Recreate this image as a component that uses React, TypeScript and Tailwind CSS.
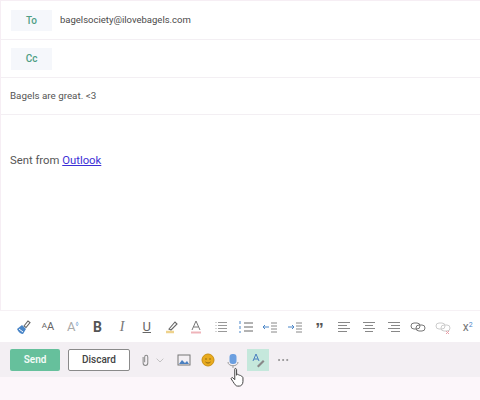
import { MoreHorizontal } from "lucide-react";

const FONT = { fontFamily: 'Roboto, "Noto Sans", sans-serif' };

function Ic({ children, className = "w-[18px]" }: { children: React.ReactNode; className?: string }) {
  return (
    <svg viewBox="0 0 18 18" fill="none" className={`h-[18px] shrink-0 ${className}`}>
      {children}
    </svg>
  );
}

// every button in the format bar sits in a cell of the same width
function Cell({ children }: { children: React.ReactNode }) {
  return <div className="flex h-[18px] w-[24.7px] shrink-0 items-center justify-center">{children}</div>;
}

function Lines({ rows }: { rows: [number, number][] }) {
  return (
    <Ic>
      {rows.map(([x1, x2], i) => (
        <path key={i} d={`M${x1} ${4.5 + i * 3}H${x2}`} stroke="#888" strokeWidth="1" />
      ))}
    </Ic>
  );
}

function FormatBar() {
  return (
    <div className="flex h-[32px] items-center overflow-hidden border-t border-[#f6f1f5] bg-white pl-[11px]">
      <Cell>
        <Ic>
          <path d="M10 8l4-5 2 1.5-4 5z" stroke="#666" strokeWidth="1.1" />
          <path d="M3 11l5-4 4 4-3 5c-2 0-5-2-6-5z" fill="#4a86c8" />
          <path d="M5 11l4 3" stroke="#fff" />
        </Ic>
      </Cell>
      <Cell>
        <span className="text-[11px] leading-none text-[#666]">
          <span className="relative top-[-2px] text-[8px]">A</span>A
        </span>
      </Cell>
      <Cell>
        <span className="text-[13px] leading-none text-[#aaa]">
          A<span className="relative top-[-5px] text-[6px] text-[#6a9bd0]">◊</span>
        </span>
      </Cell>
      <Cell>
        <span className="text-[14px] font-bold leading-none text-[#555]">B</span>
      </Cell>
      <Cell>
        <span style={{ fontFamily: '"Liberation Serif", serif' }} className="text-[14px] italic leading-none text-[#777]">I</span>
      </Cell>
      <Cell>
        <span className="text-[13px] leading-none text-[#666] underline">U</span>
      </Cell>
      <Cell>
        <Ic>
          <path d="M7 11l6-7 2 2-6 6z" stroke="#666" strokeWidth="1.1" />
          <path d="M4 14h8" stroke="#eed28c" strokeWidth="2.5" />
        </Ic>
      </Cell>
      <Cell>
        <Ic>
          <path d="M5 12L9 3l4 9M6.5 9h5" stroke="#777" strokeWidth="1" />
          <path d="M4 14.5h10" stroke="#efb4ba" strokeWidth="2" />
        </Ic>
      </Cell>
      <Cell>
        <Ic>
          <path d="M3.5 4.5H4.5M3.5 7.5H4.5M3.5 10.5H4.5M3.5 13.5H4.5" stroke="#aaa" />
          <path d="M6 4.5h9M6 7.5h9M6 10.5h9M6 13.5h9" stroke="#999" />
        </Ic>
      </Cell>
      <Cell>
        <Ic>
          <path d="M7 5h9M7 9h9M7 13h9" stroke="#666" />
          <path d="M3 3v3M3 8v3M3 13v2" stroke="#4a86c8" />
        </Ic>
      </Cell>
      <Cell>
        <Ic>
          <path d="M2 9h6M4 7L2 9l2 2" stroke="#4a86c8" />
          <path d="M10 5h6M10 8h6M10 11h6M10 14h6" stroke="#888" />
        </Ic>
      </Cell>
      <Cell>
        <Ic>
          <path d="M2 9h6M6 7l2 2-2 2" stroke="#4a86c8" />
          <path d="M10 5h6M10 8h6M10 11h6M10 14h6" stroke="#888" />
        </Ic>
      </Cell>
      <Cell>
        <span style={{ fontFamily: '"Liberation Sans", sans-serif' }} className="h-[14px] text-[17px] font-bold leading-[20px] text-[#555]">”</span>
      </Cell>
      <Cell><Lines rows={[[3, 15], [3, 12], [3, 15], [3, 12]]} /></Cell>
      <Cell><Lines rows={[[3, 15], [5, 13], [3, 15], [5, 13]]} /></Cell>
      <Cell><Lines rows={[[3, 15], [6, 15], [3, 15], [6, 15]]} /></Cell>
      <Cell>
        <Ic>
          <rect x="2" y="5" width="9" height="6" rx="3" stroke="#777" />
          <rect x="7" y="7" width="9" height="6" rx="3" stroke="#777" />
        </Ic>
      </Cell>
      <Cell>
        <Ic>
          <rect x="2" y="5" width="9" height="6" rx="3" stroke="#ccc" />
          <rect x="7" y="7" width="9" height="6" rx="3" stroke="#ccc" />
          <path d="M12 13l3 3m0-3l-3 3" stroke="#e8a0a8" />
        </Ic>
      </Cell>
      <Cell>
        <span className="text-[12px] leading-none text-[#777]">
          x<span className="relative top-[-4px] text-[7px] text-[#4a86c8]">2</span>
        </span>
      </Cell>
    </div>
  );
}

function ActionBar() {
  return (
    <div className="flex h-[35px] items-center bg-[#f3eff3] pl-[10px]">
      <button className="h-[22px] w-[50px] rounded-[2px] bg-[#66c09c] text-[10px] font-semibold text-[#f4fbf8]">Send</button>
      <button className="ml-[8px] h-[22px] w-[62px] rounded-[2px] border border-[#8a8a8a] bg-white text-[10px] font-medium text-[#444]">
        Discard
      </button>
      <div className="ml-[10px] flex items-center gap-[2px]">
        <Ic className="w-[14px]">
          <path d="M4 5v8a3 3 0 006 0V5a2 2 0 00-4 0v7" stroke="#888" strokeWidth="1.3" />
        </Ic>
        <Ic className="w-[12px]">
          <path d="M1 7l5 5 5-5" stroke="#aaa" />
        </Ic>
      </div>
      <div className="ml-[7px]">
        <Ic>
          <rect x="3" y="4" width="12" height="10" stroke="#777" />
          <path d="M4 13l3-4 3 3 2-2 2 3z" fill="#4a7fc0" />
        </Ic>
      </div>
      <div className="ml-[6px]">
        <Ic>
          <circle cx="9" cy="9" r="6" fill="#e9ab1e" stroke="#c98f10" />
          <circle cx="7" cy="8" r=".8" fill="#8a6510" />
          <circle cx="11" cy="8" r=".8" fill="#8a6510" />
          <path d="M6.5 11c1.5 1.4 3.5 1.4 5 0" stroke="#8a6510" />
        </Ic>
      </div>
      <div className="ml-[7px]">
        <Ic>
          <rect x="5.5" y="3" width="7" height="10" rx="3" fill="#6b9fe0" />
          <path d="M4 11c0 5 10 5 10 0M9 15v2" stroke="#999" />
        </Ic>
      </div>
      <div className="ml-[5px] flex h-[22px] w-[22px] items-center justify-center bg-[#c5e8dc]">
        <Ic>
          <path d="M4 10l3-7 3 7M5 8h4" stroke="#4a7fc0" />
          <path d="M8 15l6-6 1.5 1.5-6 6z" fill="#888" />
        </Ic>
      </div>
      <MoreHorizontal className="ml-[7px] h-[14px] w-[14px] text-[#888]" strokeWidth={1.5} />
    </div>
  );
}

export default function App() {
  return (
    <div style={FONT} className="relative flex h-[400px] w-[480px] flex-col overflow-hidden bg-white text-[10px] text-[#444]">
      <div className="flex min-h-0 flex-1 flex-col border-l border-t border-[#f6eef4]">
        <div className="flex h-[39px] items-center border-b border-[#f3eff3] pl-[10px]">
          <div className="flex h-[21px] w-[41px] items-center justify-center bg-[#f5f7fb] font-medium text-[#4f9e85]">To</div>
          <span className="ml-[8px] pt-[1px] text-[9.5px] text-[#4a4a4a]">bagelsociety@ilovebagels.com</span>
        </div>
        <div className="flex h-[38px] items-center border-b border-[#f3eff3] pl-[10px]">
          <div className="flex h-[22px] w-[41px] items-center justify-center bg-[#f5f7fb] font-medium text-[#4f9e85]">Cc</div>
        </div>
        <div className="flex h-[37px] items-center border-b border-[#f3eff3] pl-[9px] text-[9.8px] text-[#555]">Bagels are great. &lt;3</div>
        <div className="flex-1 pl-[9px] pt-[38px] text-[11.3px] leading-[16px] text-[#555]">
          Sent from <a className="text-[#3c2fd6] underline">Outlook</a>
        </div>
      </div>
      <FormatBar />
      <ActionBar />
      <div className="h-[23px] bg-[#fcf6fa]" />
      {/* hand cursor over the dictate button */}
      <svg viewBox="0 0 18 22" className="absolute left-[229px] top-[367px] h-[20px] w-[17px]">
        <path
          d="M6 2c1-1 2 0 2 1v6l1-1c1 0 1 1 2 1s1 0 2 1c1 0 2 1 2 2v4c0 3-2 5-4 5H9c-2 0-3-2-5-5l-2-3c0-1 1-2 2-1l2 2V3z"
          fill="#fff"
          stroke="#444"
          strokeWidth="1.1"
        />
      </svg>
    </div>
  );
}
